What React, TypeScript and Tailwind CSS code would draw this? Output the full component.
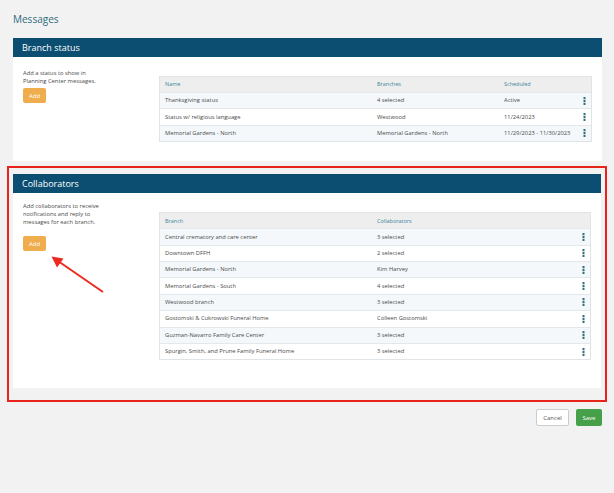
import React from "react";

const statuses = [
  { name: "Thanksgiving status", branches: "4 selected", scheduled: "Active" },
  { name: "Status w/ religious language", branches: "Westwood", scheduled: "11/24/2023" },
  {
    name: "Memorial Gardens - North",
    branches: "Memorial Gardens - North",
    scheduled: "11/29/2023 - 11/30/2023",
  },
];

const collaborators = [
  { branch: "Central crematory and care center", who: "3 selected" },
  { branch: "Downtown DFFH", who: "2 selected" },
  { branch: "Memorial Gardens - North", who: "Kim Harvey" },
  { branch: "Memorial Gardens - South", who: "4 selected" },
  { branch: "Westwood branch", who: "3 selected" },
  { branch: "Gostomski & Cukrowski Funeral Home", who: "Colleen Gostomski" },
  { branch: "Guzman-Navarro Family Care Center", who: "3 selected" },
  { branch: "Spurgin, Smith, and Prune Family Funeral Home", who: "3 selected" },
];

const Kebab = () => (
  <svg width="3" height="8" viewBox="0 0 3 8" className="block">
    <rect x="0.5" y="0" width="2" height="2.2" fill="#2f7177" />
    <rect x="0.5" y="2.9" width="2" height="2.2" fill="#2f7177" />
    <rect x="0.5" y="5.8" width="2" height="2.2" fill="#2f7177" />
  </svg>
);

const AddButton = () => (
  <button className="w-[23px] h-[15px] rounded-[2px] bg-[#f0ad4e] text-white text-[6px] leading-none flex items-center justify-center">
    Add
  </button>
);

const PanelHeader = ({ title }: { title: string }) => (
  <div className="h-[19px] bg-[#0c4e72] flex items-center pl-[9px]">
    <span className="text-white text-[9px] leading-none">{title}</span>
  </div>
);

export default function App() {
  return (
    <div
      className="relative w-[614px] h-[493px] bg-[#f2f2f2] text-[#4a4a4a] overflow-hidden"
      style={{ fontFamily: '"Open Sans", "Noto Sans", sans-serif' }}
    >
      <div className="pl-[13px] pt-[12px] h-[38px]">
        <h1 className="text-[10px] leading-[14px] text-[#2e6b7b]">Messages</h1>
      </div>

      {/* Branch status */}
      <div className="ml-[13px] mr-[12px] bg-white">
        <PanelHeader title="Branch status" />
        <div className="flex pt-[12px] pb-[19px]">
          <div className="w-[146px] pl-[10px]">
            <p className="text-[5.8px] leading-[8px] w-[78px]">
              Add a status to show in Planning Center messages.
            </p>
            <div className="mt-[3px]">
              <AddButton />
            </div>
          </div>
          <div className="flex-1 mr-[10px] mt-[7px] border border-[#dfe4e7]">
            <div className="flex items-center h-[15px] bg-[#eeeeee] text-[#3c86a0] text-[5.5px]">
              <div className="w-[217px] pl-[5px]">Name</div>
              <div className="w-[127px]">Branches</div>
              <div className="flex-1">Scheduled</div>
            </div>
            {statuses.map((s, i) => (
              <div
                key={s.name}
                className={`flex items-center h-[16.4px] border-t border-[#e3e8eb] text-[5.8px] ${
                  i % 2 === 0 ? "bg-[#f4f8fb]" : "bg-white"
                }`}
              >
                <div className="w-[217px] pl-[5px]">{s.name}</div>
                <div className="w-[127px]">{s.branches}</div>
                <div className="flex-1">{s.scheduled}</div>
                <div className="mr-[5px]">
                  <Kebab />
                </div>
              </div>
            ))}
          </div>
        </div>
      </div>

      {/* Collaborators (highlighted) */}
      <div className="mt-[5px] ml-[7px] mr-[7px] border-2 border-[#e8231c] pt-[6px] pb-[12px] px-[4px]">
        <div className="bg-white">
          <PanelHeader title="Collaborators" />
          <div className="flex pt-[10px] pb-[28px]">
            <div className="w-[146px] pl-[10px]">
              <p className="text-[5.8px] leading-[7.7px] w-[80px]">
                Add collaborators to receive notifications and reply to messages for each branch.
              </p>
              <div className="mt-[10px]">
                <AddButton />
              </div>
            </div>
            <div className="flex-1 mr-[10px] mt-[9px] border border-[#dfe4e7] self-start">
              <div className="flex items-center h-[15px] bg-[#eeeeee] text-[#3c86a0] text-[5.5px]">
                <div className="w-[217px] pl-[5px]">Branch</div>
                <div className="flex-1">Collaborators</div>
              </div>
              {collaborators.map((c, i) => (
                <div
                  key={c.branch}
                  className={`flex items-center h-[16.4px] border-t border-[#e3e8eb] text-[5.8px] ${
                    i % 2 === 0 ? "bg-[#f4f8fb]" : "bg-white"
                  }`}
                >
                  <div className="w-[217px] pl-[5px]">{c.branch}</div>
                  <div className="flex-1">{c.who}</div>
                  <div className="mr-[5px]">
                    <Kebab />
                  </div>
                </div>
              ))}
            </div>
          </div>
        </div>
      </div>

      <div className="flex justify-end gap-[7px] mr-[12px] mt-[7px]">
        <button className="w-[33px] h-[17px] rounded-[2px] bg-white border border-[#cccccc] text-[#555] text-[6px] leading-none">
          Cancel
        </button>
        <button className="w-[26px] h-[17px] rounded-[2px] bg-[#46a049] text-white text-[6px] leading-none">
          Save
        </button>
      </div>

      {/* annotation arrow */}
      <svg
        className="absolute left-0 top-0 pointer-events-none"
        width="614"
        height="493"
        viewBox="0 0 614 493"
      >
        <line x1="103" y1="292" x2="58" y2="261" stroke="#ec2a20" strokeWidth="2" />
        <polygon points="51.5,256.5 63.5,258.5 57,267.5" fill="#ec2a20" />
      </svg>
    </div>
  );
}
